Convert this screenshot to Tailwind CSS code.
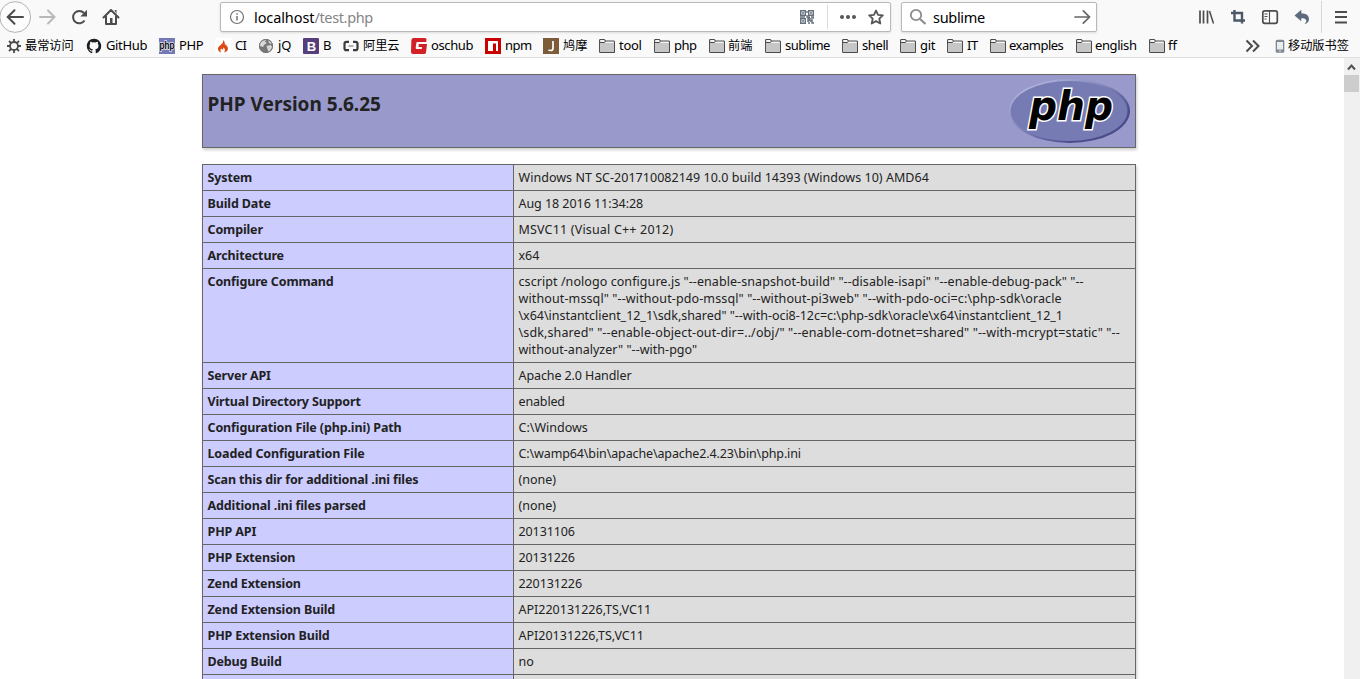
<!DOCTYPE html>
<html lang="zh">
<head>
<meta charset="utf-8">
<title>phpinfo()</title>
<script src="https://cdn.jsdelivr.net/npm/@tailwindcss/browser@4"></script>
</head>
<body class="w-[1360px] h-[679px] overflow-hidden bg-white flex flex-col font-['Noto_Sans','Noto_Sans_CJK_SC',sans-serif] text-black">
<svg class="hidden">
  <symbol id="folder" viewBox="0 0 16 16"><path d="M.6 13.700V2.300q0-.8.800-.8h3.800l1.300 1.500h8.100q.9 0 .9.900v9.800q0 .8-.8.8H1.400q-.8 0-.8-.8z" fill="#f4f4f4" stroke="#4a4a4a" stroke-width="1.100"/><path d="M1.100 5h13.900v9H1.100z" fill="#c6c6c6"/><path d="M1 4.500h4.500l1-1.500" fill="none" stroke="#4a4a4a"/></symbol>
</svg>
<header class="h-[58px] shrink-0 bg-[#f9f9fa] border-b border-[#dedede] flex flex-col">
  <div class="h-[34px] flex items-center">
    <div class="w-[220px] h-[34px] flex items-center">
      <svg class="w-[32px] h-[34px]" viewBox="0 0 32 34" fill="none"><circle cx="15.200" cy="17" r="15.400" fill="#fcfcfc" stroke="#b3b3b3"/><path d="M23 17H8m6.500-6.800L7.700 17l6.800 6.800" stroke="#4c4c4d" stroke-width="2" stroke-linecap="round"/></svg>
      <svg class="w-[32px] h-[34px]" viewBox="32 0 32 34" fill="none"><path d="M40 17h14m-6-6.500 6.500 6.500-6.500 6.500" stroke="#b9b9ba" stroke-width="2" stroke-linecap="round"/></svg>
      <svg class="w-[32px] h-[34px]" viewBox="64 0 32 34" fill="none"><path d="M84.500 20.500a6.200 6.200 0 1 1-.6-7.500" stroke="#4c4c4d" stroke-width="2"/><path d="M87 9.800v6.700h-6.700z" fill="#4c4c4d"/></svg>
      <svg class="w-[32px] h-[34px]" viewBox="96 0 32 34" fill="none"><path d="m103.500 17.500 7.500-7.500 7.500 7.500M106 16.500v7.500h10v-7.500" stroke="#4c4c4d" stroke-width="2" stroke-linejoin="round" stroke-linecap="round"/><path d="M110 18h2.500v6H110zM114.500 10h2v4z" fill="#4c4c4d"/></svg>
    </div>
    <div class="w-[671px] h-[30px] bg-white border border-[#b8b8b8] rounded-xs flex items-center shadow-sm">
      <svg class="w-4 h-4 ml-2" viewBox="0 0 16 16" fill="none"><circle cx="8" cy="8" r="6.500" stroke="#737373" stroke-width="1.200"/><path d="M8 7v4.500M8 4.200v1.500" stroke="#737373" stroke-width="1.500"/></svg>
      <div class="ml-[9px] text-[14.500px] leading-5 w-[546px] whitespace-nowrap"><span class="tracking-[-0.1px]">localhost</span><span class="text-[#858585] tracking-[-0.35px]">/test.php</span></div>
      <svg class="w-[14px] h-[14px]" viewBox="0 0 14 14" fill="none" stroke="#64707c"><path d="M.700.700h4.600v4.600H.700zM8.700.700h4.600v4.600H8.700zM.700 8.700h4.600v4.600H.700z" stroke-width="1.400"/><path d="M2 3h2M10 3h2M2 11h2M8 8.500h2v2H8zM12 8v3M13 8h1M10 11h2v2h2M8 13h2M8 11v1M7 1v2M7 5v2h3M11 7h3M0 7h5" stroke-width="1.400"/></svg>
      <div class="w-px h-6 bg-[#dadada] ml-[13px]"></div>
      <svg class="w-4 h-4 ml-[12px]" viewBox="0 0 16 16" fill="#555"><circle cx="2" cy="8" r="2"/><circle cx="8" cy="8" r="2"/><circle cx="14" cy="8" r="2"/></svg>
      <svg class="w-4 h-4 ml-[12px]" viewBox="0 0 16 16" fill="none"><path d="m8 1.500 2 4.400 4.800.5-3.500 3.300 1 4.800L8 12.100l-4.300 2.400 1-4.800L1.200 6.400 6 5.900z" stroke="#555" stroke-width="1.800" stroke-linejoin="round"/></svg>
    </div>
    <div class="w-[196px] h-[30px] ml-[10px] bg-white border border-[#b8b8b8] rounded-xs flex items-center shadow-sm">
      <svg class="w-[18px] h-[18px] ml-[7px]" viewBox="0 0 18 18" fill="none" stroke="#8c8c8c"><circle cx="7" cy="7" r="5.200" stroke-width="1.800"/><path d="m11 11 5.500 5" stroke-width="2.200"/></svg>
      <div class="ml-[6px] w-[141px] text-[14.500px] leading-5 tracking-[-0.3px]">sublime</div>
      <svg class="w-[17px] h-4" viewBox="0 0 17 16" fill="none"><path d="M1 8h14M9.300 1.800 15.500 8l-6.200 6.200" stroke="#666" stroke-width="1.700" stroke-linecap="round"/></svg>
    </div>
    <svg class="w-[263px] h-[34px]" viewBox="1097 0 263 34" fill="none">
      <path d="M1200 10.500v13M1203.500 10.500v13M1207.500 10.500v13" stroke="#4c4c4d" stroke-width="1.700"/><path d="m1209.500 11 4 12.500" stroke="#4c4c4d" stroke-width="1.500"/>
      <path d="M1231 13h11v10.500M1234.500 10v10.500h10.500" stroke="#4b5866" stroke-width="2.400"/>
      <rect x="1262.800" y="10.800" width="14.500" height="12.500" rx="2" stroke="#4c4c4d" stroke-width="1.700"/><path d="M1269.500 11v12M1264.500 14h3M1264.500 16.500h3M1264.500 19h2" stroke="#4c4c4d" stroke-width="1.100"/>
      <path d="m1294.500 15.500 6.800-5.700v3.500c5 .1 7.700 2.300 7.700 5.700 0 2.800-1.600 4.500-4.500 5 1.500-1.500 2-2.300 1.700-3.700-.4-1.500-1.900-2-4.900-2v3z" fill="#5c6c7c"/>
      <path d="M1321.500 1v32" stroke="#d7d7d8"/><path d="M1335 12h12M1335 17h12M1335 22.500h12" stroke="#4c4c4d" stroke-width="2"/>
    </svg>
  </div>
  <nav class="h-[23px] pl-[6px] flex items-center whitespace-nowrap text-[13px] leading-[18px] [&_span]:-mt-px">
    <div class="w-[80px] flex items-center gap-[3px] shrink-0"><svg class="w-4 h-4 shrink-0" viewBox="0 0 16 16" fill="none" stroke="#4c4c4d"><circle cx="8" cy="8" r="4" stroke-width="1.800"/><path d="M8 1v3M8 12v3M1 8h3M12 8h3M3 3l2.200 2.200M10.800 10.800 13 13M3 13l2.200-2.200M10.800 5.200 13 3" stroke-width="1.800"/></svg><span class="text-[12.200px] pt-[2px]">最常访问</span></div>
    <div class="w-[73px] flex items-center gap-1 shrink-0"><svg class="w-4 h-4 shrink-0" viewBox="0 0 16 16"><path fill="#1b1f23" d="M8 .8C3.900.8.800 4 .800 8c0 3.400 2.100 6.200 5 7.200.4.100.5-.2.500-.4v-1.400c-2 .4-2.500-.9-2.500-.9-.3-.8-.8-1.100-.8-1.100-.7-.5 0-.5 0-.5.8.1 1.200.8 1.200.8.6 1.200 1.800.8 2.200.6.100-.5.3-.8.5-1-1.700-.2-3.400-.8-3.400-3.600 0-.8.3-1.500.7-2 0-.2-.3-.9.100-1.900 0 0 .6-.2 2 .7a7 7 0 0 1 3.500 0c1.300-.9 1.900-.7 1.900-.7.4 1 .2 1.700.1 1.900.5.500.7 1.200.7 2 0 2.800-1.700 3.400-3.300 3.600.3.200.5.700.5 1.300v2.200c0 .2.100.5.500.4 2.900-1 5-3.800 5-7.200C15.200 4 12.100.800 8 .800z"/></svg><span class="tracking-[-0.35px]">GitHub</span></div>
    <div class="w-[56px] flex items-center gap-1 shrink-0"><svg class="w-4 h-4 shrink-0" viewBox="0 0 16 16"><path fill="#7478b4" d="M0 0h16v16H0z"/><text x=".5" y="11" font-size="10" textLength="15" lengthAdjust="spacingAndGlyphs" font-family="Roboto" font-weight="500" fill="#000" stroke="#e5e5f5" stroke-width="1.500" paint-order="stroke">php</text></svg><span class="tracking-[-0.4px]">PHP</span></div>
    <div class="w-[43px] flex items-center gap-1 shrink-0"><svg class="w-4 h-4 shrink-0" viewBox="0 0 16 16"><path fill="#fff" d="M0 0h16v16H0z"/><path fill="#dd4814" d="M8 2c.6 2-.2 3-1.600 4.300C4.500 8 3 9 3 11c0 1.700 1.400 3 3.400 3.500C5 13 5.200 11.500 6.500 10.500c.2 1 .8 1.300 1.300 1 .9-.4.500-1.300.400-2 1.600.8 2.600 3 .8 5 3.300-.8 4.500-3 3.800-5C12.200 8 11 7.500 11 6c-.7.500-.8 1-.7 1.800C9.600 7.200 10.500 3.500 8 2z"/></svg><span class="tracking-[-0.7px]">CI</span></div>
    <div class="w-[45px] flex items-center gap-1 shrink-0"><svg class="w-4 h-4 shrink-0" viewBox="0 0 16 16"><circle cx="8" cy="8" r="7" fill="#777"/><path fill="#d8d8d8" d="M2 5l3-2.500 3-.5-1 2 2 1-3 2-1 2-3-1zM10 2l4 3-1 1-2-1zM8.500 8l4-1 2 2-2 3-2 2-1-3z"/><circle cx="8" cy="8" r="6.600" fill="none" stroke="#777"/></svg><span>jQ</span></div>
    <div class="w-[40px] flex items-center gap-[4px] shrink-0"><svg class="w-4 h-4 shrink-0" viewBox="0 0 16 16"><rect width="16" height="16" rx="1" fill="#563d7c"/><text x="3.700" y="12.700" font-size="13" font-family="Liberation Sans" font-weight="700" fill="#fff">B</text></svg><span>B</span></div>
    <div class="w-[68px] flex items-center gap-1 shrink-0"><svg class="w-4 h-4 shrink-0" viewBox="0 0 16 16" fill="none" stroke="#3a3a3a" stroke-width="2.200"><path d="M6 3.800H3.500q-2 0-2 2v4.400q0 2 2 2H6M10 3.800h2.500q2 0 2 2v4.400q0 2-2 2H10"/><path d="M5.500 8h5" stroke="#999" stroke-width="1.500"/></svg><span class="text-[12.200px] pt-[2px]">阿里云</span></div>
    <div class="w-[74px] flex items-center gap-1 shrink-0"><svg class="w-4 h-4 shrink-0" viewBox="0 0 16 16"><path fill="#d32027" d="M2.500 0H14q1.500 0 1.500 1.500L15.200 4H6.500q-1 0-1.200 1l-.6 5q-.1 1 .8 1h5.300l.3-2H7.500l.3-3H16l-1 8.500q-.3 1.500-2 1.500H2q-2 0-2-2L.400 2Q.600 0 2.500 0z"/></svg><span class="tracking-[-0.4px]">oschub</span></div>
    <div class="w-[58px] flex items-center gap-1 shrink-0"><svg class="w-4 h-4 shrink-0" viewBox="0 0 16 16"><path fill="#cb0000" d="M0 0h16v16H0z"/><path fill="#fff" d="M3 3h10v10h-2V5.500H8V13H3z" /><path fill="#cb0000" d="M5.500 5.500H8V13H5.500z" opacity="0"/></svg><span class="tracking-[-0.5px]">npm</span></div>
    <div class="w-[56px] flex items-center gap-1 shrink-0"><svg class="w-4 h-4 shrink-0" viewBox="0 0 16 16"><path fill="#7d5a38" d="M0 0h16v16H0z"/><path d="M10 3v7q0 2.500-2.300 2.500-1.500 0-2.200-.8" fill="none" stroke="#fff" stroke-width="1.700"/></svg><span class="text-[12.200px] pt-[2px]">鸠摩</span></div>
    <div class="w-[55px] flex items-center gap-1 shrink-0"><svg class="w-4 h-4 shrink-0"><use href="#folder"/></svg><span class="tracking-[-0.3px]">tool</span></div>
    <div class="w-[55px] flex items-center gap-1 shrink-0"><svg class="w-4 h-4 shrink-0"><use href="#folder"/></svg><span class="tracking-[-0.5px]">php</span></div>
    <div class="w-[56px] flex items-center gap-[3px] shrink-0"><svg class="w-4 h-4 shrink-0"><use href="#folder"/></svg><span class="text-[12.200px] pt-[2px]">前端</span></div>
    <div class="w-[77px] flex items-center gap-1 shrink-0"><svg class="w-4 h-4 shrink-0"><use href="#folder"/></svg><span class="tracking-[-0.5px]">sublime</span></div>
    <div class="w-[58px] flex items-center gap-1 shrink-0"><svg class="w-4 h-4 shrink-0"><use href="#folder"/></svg><span class="tracking-[-0.4px]">shell</span></div>
    <div class="w-[47px] flex items-center gap-1 shrink-0"><svg class="w-4 h-4 shrink-0"><use href="#folder"/></svg><span class="tracking-[-0.3px]">git</span></div>
    <div class="w-[43px] flex items-center gap-1 shrink-0"><svg class="w-4 h-4 shrink-0"><use href="#folder"/></svg><span class="tracking-[-0.3px]">IT</span></div>
    <div class="w-[86px] flex items-center gap-[3px] shrink-0"><svg class="w-4 h-4 shrink-0"><use href="#folder"/></svg><span class="tracking-[-0.500px]">examples</span></div>
    <div class="w-[73px] flex items-center gap-[3px] shrink-0"><svg class="w-4 h-4 shrink-0"><use href="#folder"/></svg><span class="tracking-[-0.4px]">english</span></div>
    <div class="w-[96px] flex items-center gap-[3px] shrink-0"><svg class="w-4 h-4 shrink-0"><use href="#folder"/></svg><span>ff</span></div>
    <svg class="w-[30px] h-4 shrink-0" viewBox="0 0 30 16" fill="none"><path d="m1.500 2.500 5.500 5.500-5.500 5.500M8 2.500 13.500 8 8 13.500" stroke="#4c4c4d" stroke-width="2"/></svg>
    <svg class="w-[10px] h-4 shrink-0" viewBox="0 0 10 16"><rect x=".7" y="1.700" width="8.600" height="13" rx="1.500" fill="#7f8890"/><path fill="#e8edf0" d="M2 4h6v7.500H2z"/><circle cx="5" cy="13" r=".8" fill="#e8edf0"/></svg>
    <span class="text-[12.200px] ml-[3px] pt-[2px]">移动版书签</span>
  </nav>
</header>
<div class="flex grow min-h-0">
  <main class="grow pl-[202px] pt-4 overflow-hidden text-[#222] text-[12.500px] leading-[17px]">
    <div class="w-[934px] h-[74px] bg-[#9999cc] border border-[#666] shadow-[1px_2px_3px_#ccc] flex justify-between pl-[4.500px] pr-[5px]">
      <h1 class="text-[19px] leading-7 font-bold mt-[15px]">PHP Version 5.6.25</h1>
      <svg class="w-[121px] h-[66px] mt-[3px]" viewBox="0 0 121 66">
        <defs><linearGradient id="rim" x1="0" y1="0" x2="1" y2="1"><stop offset=".15" stop-color="#aeb2d9"/><stop offset=".5" stop-color="#777bb3"/><stop offset=".75" stop-color="#484c89"/></linearGradient></defs>
        <ellipse cx="60.500" cy="33" rx="60.500" ry="32" fill="url(#rim)"/><ellipse cx="60" cy="33" rx="58.500" ry="30" fill="#777bb3"/>
        <text x="20" y="42" font-size="41" textLength="84" lengthAdjust="spacingAndGlyphs" font-family="DejaVu Sans" font-style="italic" font-weight="700" fill="#000" stroke="#fff" stroke-width="3" stroke-linejoin="miter" paint-order="stroke">php</text>
      </svg>
    </div>
    <div class="mt-4 w-[934px] h-[530px] grid grid-cols-[310px_621px] auto-rows-min gap-px p-px bg-[#666] shadow-[1px_2px_3px_#ccc] *:px-[4.500px] *:pt-[4px] *:min-h-[25px] *:bg-[#ddd] *:odd:bg-[#ccccff] *:odd:font-bold *:odd:tracking-[-0.130px] *:whitespace-nowrap">
      <div>System</div><div class="tracking-[0.03px]">Windows NT SC-201710082149 10.0 build 14393 (Windows 10) AMD64</div>
      <div>Build Date</div><div class="tracking-[-0.05px]">Aug 18 2016 11:34:28</div>
      <div>Compiler</div><div class="tracking-[0.18px]">MSVC11 (Visual C++ 2012)</div>
      <div>Architecture</div><div>x64</div>
      <div>Configure Command</div><div class="h-[93px]"><span class="tracking-[0.07px]">cscript /nologo configure.js "--enable-snapshot-build" "--disable-isapi" "--enable-debug-pack" "--</span><br><span class="tracking-[0.12px]">without-mssql" "--without-pdo-mssql" "--without-pi3web" "--with-pdo-oci=c:\php-sdk\oracle</span><br><span class="tracking-[-0.03px]">\x64\instantclient_12_1\sdk,shared" "--with-oci8-12c=c:\php-sdk\oracle\x64\instantclient_12_1</span><br><span class="tracking-[0.12px]">\sdk,shared" "--enable-object-out-dir=../obj/" "--enable-com-dotnet=shared" "--with-mcrypt=static" "--</span><br><span class="tracking-[0.03px]">without-analyzer" "--with-pgo"</span></div>
      <div>Server API</div><div class="tracking-[-0.100px]">Apache 2.0 Handler</div>
      <div>Virtual Directory Support</div><div class="tracking-[-0.15px]">enabled</div>
      <div>Configuration File (php.ini) Path</div><div>C:\Windows</div>
      <div>Loaded Configuration File</div><div class="tracking-[-0.12px]">C:\wamp64\bin\apache\apache2.4.23\bin\php.ini</div>
      <div>Scan this dir for additional .ini files</div><div>(none)</div>
      <div>Additional .ini files parsed</div><div>(none)</div>
      <div>PHP API</div><div class="tracking-[-0.100px]">20131106</div>
      <div>PHP Extension</div><div class="tracking-[-0.100px]">20131226</div>
      <div>Zend Extension</div><div class="tracking-[-0.100px]">220131226</div>
      <div>Zend Extension Build</div><div>API220131226,TS,VC11</div>
      <div>PHP Extension Build</div><div>API20131226,TS,VC11</div>
      <div>Debug Build</div><div>no</div>
      <div></div><div></div>
    </div>
  </main>
  <div class="w-4 bg-[#f0f0f0] flex flex-col items-center shrink-0">
    <svg class="w-4 h-[17px]" viewBox="0 0 16 17" fill="none"><path d="m4 11.500 3.500-4 3.500 4" stroke="#505050" stroke-width="2"/></svg>
    <div class="w-[15px] h-[17px] bg-[#cdcdcd] self-start"></div>
  </div>
</div>
</body>
</html>
